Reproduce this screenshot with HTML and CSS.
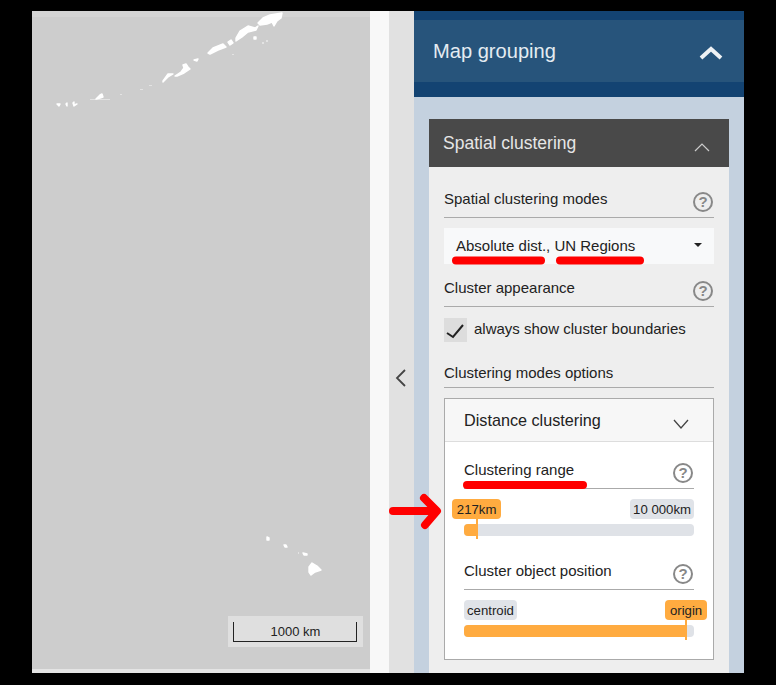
FILE: index.html
```html
<!DOCTYPE html>
<html lang="en">
<head>
    <meta charset="UTF-8">
    <meta name="viewport" content="width=device-width, initial-scale=1.0">
    <title>Map grouping</title>
    <link rel="stylesheet" href="styles.css">
</head>
<body>
    <div class="frame">
        <div class="map">
            <svg class="land" viewBox="32 11 338 658" width="338" height="658">
                <path d="M258 23 L263 18 L270 15 L282 13 L281 18 L277 21 L274 26 L272 22 L267 24 L260 25 Z"/>
                <path d="M236 38 L240 31 L248 26 L255 28 L258 26 L256 30 L248 32 L242 37 L236 41 Z"/>
                <path d="M208 53 L213 48 L223 44 L226 47 L218 50 L210 54 Z"/>
                <path d="M228 42 L231 40 L233 43 L230 45 Z"/>
                <path d="M183 65 L186 64 L188 67 L190 69 L184 73 L177 76 L175 76 L181 72 L184 68 Z"/>
                <path d="M163 81 L168 74 L173 74 L168 77 L163 82 Z"/>
                <path d="M254 37 L256 37 L256 39 L254 39 Z"/>
                <path d="M194 60 L198 59 L197 61 Z"/>
                <path d="M100 95 L102 94 L103 97 L100 98 L96 99 L97 98 Z"/>
                <path d="M73 103 L74 102 L74 105 L77 104 L74 106 Z"/>
                <path d="M66 104 L67 103 L67 106 Z"/>
                <path d="M57 104 L60 104 L59 106 Z"/>
                <path d="M309 567 L312 563 L317 566 L321 570 L315 572 L311 575 L309 572 Z"/>
                <path d="M303 553 L307 554 L307 555 L304 555 Z"/>
                <path d="M284 545 L286 545 L287 547 L285 547 Z"/>
                <path d="M267 537 L269 538 L269 540 L267 540 Z"/>
                <g class="faint">
                    <path d="M90 99 L110 99 L110 100 L90 100 Z"/>
                    <path d="M120 94 L122 94 L122 95 L120 95 Z"/>
                    <path d="M140 89 L143 89 L143 90 L140 90 Z"/>
                    <path d="M149 85 L152 85 L152 86 L149 86 Z"/>
                    <path d="M262 42 L264 42 L264 44 L262 44 Z"/>
                    <path d="M266 40 L268 40 L268 42 L266 42 Z"/>
                    <path d="M232 54 L234 54 L234 55 L232 55 Z"/>
                    <path d="M298 552 L299 552 L299 554 L298 554 Z"/>
                </g>
            </svg>
            <div class="scale">
                <div class="scale-bar">1000 km</div>
            </div>
        </div>
        <div class="gutter"></div>
        <div class="toggle">
            <svg width="12" height="18" viewBox="0 0 12 18"><polyline points="10,1 2,9 10,17"/></svg>
        </div>
        <div class="panel">
            <div class="panel-head">
                <div class="panel-title">
                    <span>Map grouping</span>
                    <svg width="24" height="16" viewBox="0 0 24 16"><polyline points="2,13 12,4 22,13"/></svg>
                </div>
            </div>
            <div class="panel-body">
                <div class="card">
                    <div class="card-head">
                        <span>Spatial clustering</span>
                        <svg width="16" height="10" viewBox="0 0 16 10"><polyline points="1,9 8,2 15,9"/></svg>
                    </div>
                    <div class="card-body">
                        <div class="sec-head first">
                            <span>Spatial clustering modes</span>
                            <span class="help">?</span>
                        </div>
                        <div class="select">
                            <span>Absolute dist., UN Regions</span>
                            <span class="caret"></span>
                        </div>
                        <div class="sec-head appearance">
                            <span>Cluster appearance</span>
                            <span class="help">?</span>
                        </div>
                        <div class="check-row">
                            <span class="check">
                                <svg width="23" height="24" viewBox="0 0 23 24"><polyline points="3,15 9,19 19,7"/></svg>
                            </span>
                            <span>always show cluster boundaries</span>
                        </div>
                        <div class="sec-head options">
                            <span>Clustering modes options</span>
                        </div>
                        <div class="box">
                            <div class="box-head">
                                <span>Distance clustering</span>
                                <svg width="16" height="10" viewBox="0 0 16 10"><polyline points="1,1 8,9 15,1"/></svg>
                            </div>
                            <div class="box-body">
                                <div class="sec-head range">
                                    <span>Clustering range</span>
                                    <span class="help">?</span>
                                </div>
                                <div class="labels">
                                    <span class="tag on low">217km</span>
                                    <span class="tag">10 000km</span>
                                </div>
                                <div class="track"><div class="fill" style="width: 12px"></div></div>
                                <div class="sec-head position">
                                    <span>Cluster object position</span>
                                    <span class="help">?</span>
                                </div>
                                <div class="labels">
                                    <span class="tag">centroid</span>
                                    <span class="tag on high">origin</span>
                                </div>
                                <div class="track"><div class="fill" style="width: 222px"></div></div>
                            </div>
                        </div>
                    </div>
                </div>
            </div>
        </div>
    </div>

    <svg class="marks" width="776" height="685" viewBox="0 0 776 685">
        <line x1="456" y1="260.5" x2="541" y2="260.5"/>
        <line x1="560" y1="260.5" x2="640" y2="260.5"/>
        <line x1="467" y1="485" x2="583" y2="485"/>
        <line x1="393" y1="511" x2="434" y2="511"/>
        <polyline points="424,498 437,511 425,525"/>
    </svg>
</body>
</html>
```

FILE: styles.css
```css
* {
    box-sizing: border-box;
}

body {
    margin: 0;
    height: 685px;
    padding: 11px 32px 12px;
    overflow: hidden;
    background: #000;
    color: #222;
    font-family: "Liberation Sans", Arial, sans-serif;
    font-size: 15px;
}

svg polyline {
    fill: none;
}

.frame {
    display: flex;
    height: 662px;
}

.map {
    position: relative;
    width: 338px;
    background: #cdcdcd;
    border-top: 6px solid #d3d3d3;
    border-bottom: 4px solid #e4e4e4;
}

.land {
    display: block;
    margin-top: -6px;
    fill: #fff;
    stroke: #fff;
    stroke-width: 1.4;
    stroke-linejoin: round;
}

.land .faint {
    stroke: none;
    opacity: 0.45;
}

.scale {
    position: absolute;
    left: 196px;
    bottom: 22px;
    width: 135px;
    height: 31px;
    padding: 6px 6px 0 5px;
    background: #dfdfdf;
}

.scale-bar {
    height: 20px;
    padding-left: 1px;
    border: 1px solid #222;
    border-top: 0;
    font-size: 13px;
    line-height: 20px;
    text-align: center;
}

.gutter {
    width: 19px;
    background: #f8f8f8;
}

.toggle {
    display: flex;
    align-items: center;
    justify-content: center;
    width: 25px;
    padding: 72px 2px 0 0;
    background: #e1e1e1;
}

.toggle polyline {
    stroke: #444;
    stroke-width: 1.8;
}

.panel {
    width: 330px;
    background: #c4d1df;
}

.panel-head {
    height: 86px;
    padding: 9px 0 15px;
    background: #134372;
}

.panel-title {
    display: flex;
    align-items: center;
    justify-content: space-between;
    height: 62px;
    padding: 0 21px 0 19px;
    background: #27547b;
    color: #e4ecf2;
    font-size: 20.1px;
}

.panel-title svg {
    margin-top: 4px;
}

.panel-title polyline {
    stroke: #eef2f5;
    stroke-width: 4;
}

.panel-body {
    padding: 22px 15px 0;
}

.card {
    height: 554px;
    background: #eee;
}

.card-head {
    display: flex;
    align-items: center;
    justify-content: space-between;
    height: 48px;
    padding: 0 19px 0 14px;
    background: #494949;
    color: #e6e6e6;
    font-size: 17.5px;
}

.card-head svg {
    margin-top: 8px;
}

.card-head polyline {
    stroke: #ccc;
    stroke-width: 1.2;
}

.card-body {
    padding: 0 15px;
}

.sec-head {
    display: flex;
    justify-content: space-between;
    height: 30px;
    border-bottom: 1px solid #aaa;
    line-height: 22px;
}

.sec-head.first {
    margin-top: 21px;
}

.sec-head.appearance {
    margin-top: 13px;
}

.sec-head.options {
    margin-top: 16px;
    padding-top: 4px;
}

.sec-head.range {
    margin-top: 17px;
}

.sec-head.position {
    margin-top: 24px;
}

.help {
    flex: none;
    width: 20px;
    height: 20px;
    margin: 4px 1px 0 0;
    border: 2px solid #888;
    border-radius: 50%;
    color: #888;
    font-size: 15px;
    font-weight: bold;
    line-height: 16px;
    text-align: center;
}

.select {
    display: flex;
    align-items: center;
    justify-content: space-between;
    height: 36px;
    margin-top: 10px;
    padding: 0 12px 2px;
    background: #f8f9fa;
}

.caret {
    border-top: 4px solid #222;
    border-left: 4px solid transparent;
    border-right: 4px solid transparent;
}

.check-row {
    display: flex;
    gap: 7px;
    height: 24px;
    margin-top: 11px;
    line-height: 22px;
}

.check {
    width: 23px;
    height: 24px;
    background: #ddd;
}

.check svg {
    display: block;
}

.check polyline {
    stroke: #222;
    stroke-width: 2;
}

.box {
    margin-top: 10px;
    height: 262px;
    border: 1px solid #aaa;
    background: #fff;
}

.box-head {
    display: flex;
    align-items: center;
    justify-content: space-between;
    height: 43px;
    padding: 0 24px 0 19px;
    background: #f7f7f7;
    border-bottom: 1px solid #ddd;
    font-size: 16.2px;
}

.box-head svg {
    margin-top: 7px;
}

.box-head polyline {
    stroke: #444;
    stroke-width: 1.3;
}

.box-body {
    padding: 0 19px;
}

.labels {
    display: flex;
    justify-content: space-between;
    margin-top: 10px;
}

.tag {
    position: relative;
    height: 20px;
    padding: 0 3px;
    border-radius: 4px;
    background: #e0e3e8;
    font-size: 13.2px;
    line-height: 22px;
}

.tag.on {
    padding: 0 4.8px;
    background: #ffab40;
}

.tag.on::after {
    content: "";
    position: absolute;
    top: 20px;
    left: 50%;
    width: 2px;
    height: 20px;
    margin-left: -1px;
    background: #ffab40;
}

.tag.low {
    margin-left: -12px;
}

.tag.high {
    margin-right: -13px;
}

.track {
    height: 12px;
    margin-top: 5px;
    border-radius: 4px;
    background: #dfe2e7;
}

.fill {
    height: 12px;
    border-radius: 4px 0 0 4px;
    background: #ffab40;
}

.marks {
    position: absolute;
    top: 0;
    left: 0;
}

.marks line,
.marks polyline {
    fill: none;
    stroke: #f00;
    stroke-width: 8;
    stroke-linecap: round;
    stroke-linejoin: round;
}
```
